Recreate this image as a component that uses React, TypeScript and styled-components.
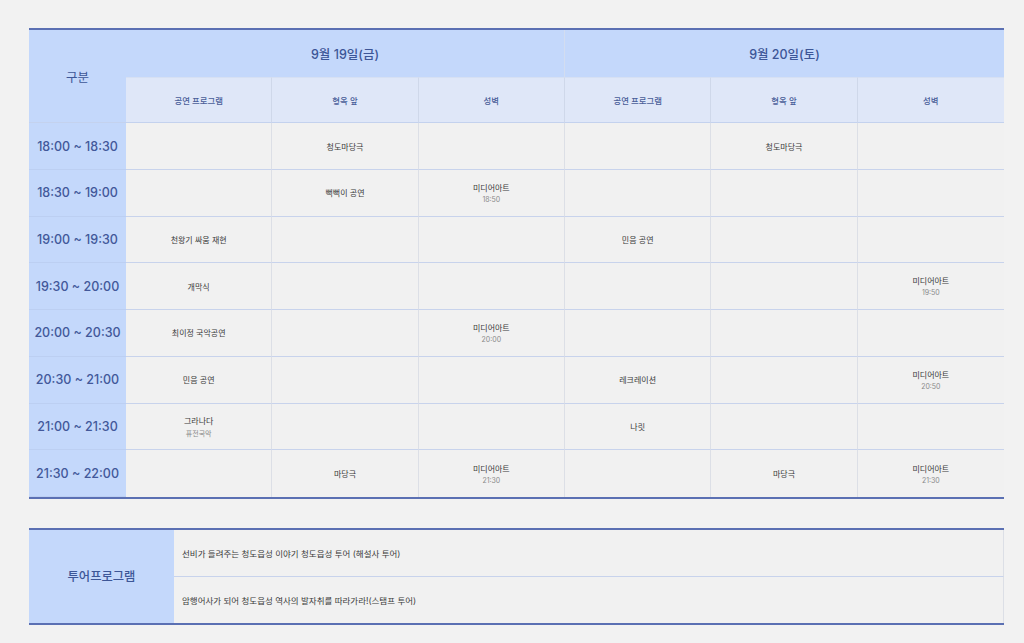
import React from "react";
import styled, { createGlobalStyle } from "styled-components";

const Global = createGlobalStyle`
  html, body { margin: 0; padding: 0; background: #f2f2f2; }
  body { font-family: Inter, "Noto Sans CJK KR", "Noto Sans", sans-serif; }
`;

const Page = styled.div`
  width: 1024px;
  min-height: 643px;
  padding: 28px 20px 0 29px;
  box-sizing: border-box;
  display: flex;
  flex-direction: column;
  gap: 29px;
`;

const Schedule = styled.div`
  width: 975px;
  display: grid;
  grid-template-columns: 97px repeat(6, 1fr);
  grid-template-rows: repeat(10, 46.7px);
  border-top: 2px solid #5b70b3;
  border-bottom: 2px solid #5b70b3;
  background: #f1f1f1;
`;

const Corner = styled.div`
  grid-row: span 2;
  background: #c4d8fb;
  display: flex;
  align-items: center;
  justify-content: center;
  font-size: 12.5px;
  font-weight: 400;
  color: #3d5697;
  border-bottom: 1px solid #c4d2ee;
`;

const DayHead = styled.div<{ $last?: boolean }>`
  grid-column: span 3;
  background: #c4d8fb;
  display: flex;
  align-items: center;
  justify-content: center;
  font-size: 12.5px;
  font-weight: 500;
  color: #3d5697;
  border-right: ${(p) => (p.$last ? "none" : "1px solid #d3ddf0")};
`;

const SubHead = styled.div<{ $last?: boolean }>`
  background: #dfe7f8;
  display: flex;
  align-items: center;
  justify-content: center;
  font-size: 8.4px;
  font-weight: 500;
  color: #4a5e98;
  border-right: ${(p) => (p.$last ? "none" : "1px solid #cfd8ea")};
  border-top: 1px solid #d6e0f3;
  border-bottom: 1px solid #c4d2ee;
`;

const TimeCell = styled.div`
  background: #c4d8fb;
  display: flex;
  align-items: center;
  justify-content: center;
  font-size: 12.5px;
  font-weight: 500;
  color: #42589a;
  border-bottom: 1px solid #bccff2;
  &:last-of-type { border-bottom: none; }
`;

const Cell = styled.div<{ $last?: boolean; $bottom?: boolean }>`
  display: flex;
  flex-direction: column;
  align-items: center;
  justify-content: center;
  gap: 2px;
  font-size: 8px;
  color: #3a3a3a;
  border-right: ${(p) => (p.$last ? "none" : "1px solid #dcdfe6")};
  border-bottom: ${(p) => (p.$bottom ? "none" : "1px solid #c8d3ec")};
`;

const SubTime = styled.span`
  font-size: 7px;
  color: #8a8a8a;
`;

const Tour = styled.div`
  width: 975px;
  display: grid;
  grid-template-columns: 145px 1fr;
  grid-template-rows: 47px 46px;
  border-top: 2px solid #5b70b3;
  border-bottom: 2px solid #5b70b3;
  background: #f1f1f1;
`;

const TourHead = styled.div`
  grid-row: span 2;
  background: #c4d8fb;
  display: flex;
  align-items: center;
  justify-content: center;
  font-size: 12.3px;
  font-weight: 500;
  color: #3d5697;
`;

const TourRow = styled.div<{ $bottom?: boolean }>`
  display: flex;
  align-items: center;
  padding-left: 8px;
  font-size: 8.5px;
  color: #3a3a3a;
  border-bottom: ${(p) => (p.$bottom ? "none" : "1px solid #c8d3ec")};
  border-right: 1px solid #dcdfe6;
`;

type Entry = { t: string; s?: string } | null;

const times = [
  "18:00 ~ 18:30",
  "18:30 ~ 19:00",
  "19:00 ~ 19:30",
  "19:30 ~ 20:00",
  "20:00 ~ 20:30",
  "20:30 ~ 21:00",
  "21:00 ~ 21:30",
  "21:30 ~ 22:00",
];

const M = (s: string): Entry => ({ t: "미디어아트", s });

const rows: Entry[][] = [
  [null, { t: "청도마당극" }, null, null, { t: "청도마당극" }, null],
  [null, { t: "뻑뻑이 공연" }, M("18:50"), null, null, null],
  [{ t: "천왕기 싸움 재현" }, null, null, { t: "민음 공연" }, null, null],
  [{ t: "개막식" }, null, null, null, null, M("19:50")],
  [{ t: "최이정 국악공연" }, null, M("20:00"), null, null, null],
  [{ t: "민음 공연" }, null, null, { t: "레크레이션" }, null, M("20:50")],
  [{ t: "그라나다", s: "퓨전국악" }, null, null, { t: "나릿" }, null, null],
  [null, { t: "마당극" }, M("21:30"), null, { t: "마당극" }, M("21:30")],
];

const subs = ["공연 프로그램", "형옥 앞", "성벽", "공연 프로그램", "형옥 앞", "성벽"];

export default function App() {
  const cells: React.ReactNode[] = [];
  rows.forEach((r, ri) => {
    cells.push(<TimeCell key={`t${ri}`}>{times[ri]}</TimeCell>);
    r.forEach((e, ci) => {
      cells.push(
        <Cell key={`c${ri}-${ci}`} $last={ci === 5} $bottom={ri === rows.length - 1}>
          {e && <span>{e.t}</span>}
          {e && e.s && <SubTime>{e.s}</SubTime>}
        </Cell>
      );
    });
  });

  return (
    <>
      <Global />
      <Page>
        <Schedule>
          <Corner>구분</Corner>
          <DayHead>9월 19일(금)</DayHead>
          <DayHead $last>9월 20일(토)</DayHead>
          {subs.map((s, i) => (
            <SubHead key={i} $last={i === 5}>
              {s}
            </SubHead>
          ))}
          {cells}
        </Schedule>
        <Tour>
          <TourHead>투어프로그램</TourHead>
          <TourRow>선비가 들려주는 청도읍성 이야기 청도읍성 투어 (해설사 투어)</TourRow>
          <TourRow $bottom>암행어사가 되어 청도읍성 역사의 발자취를 따라가라!(스탬프 투어)</TourRow>
        </Tour>
      </Page>
    </>
  );
}
